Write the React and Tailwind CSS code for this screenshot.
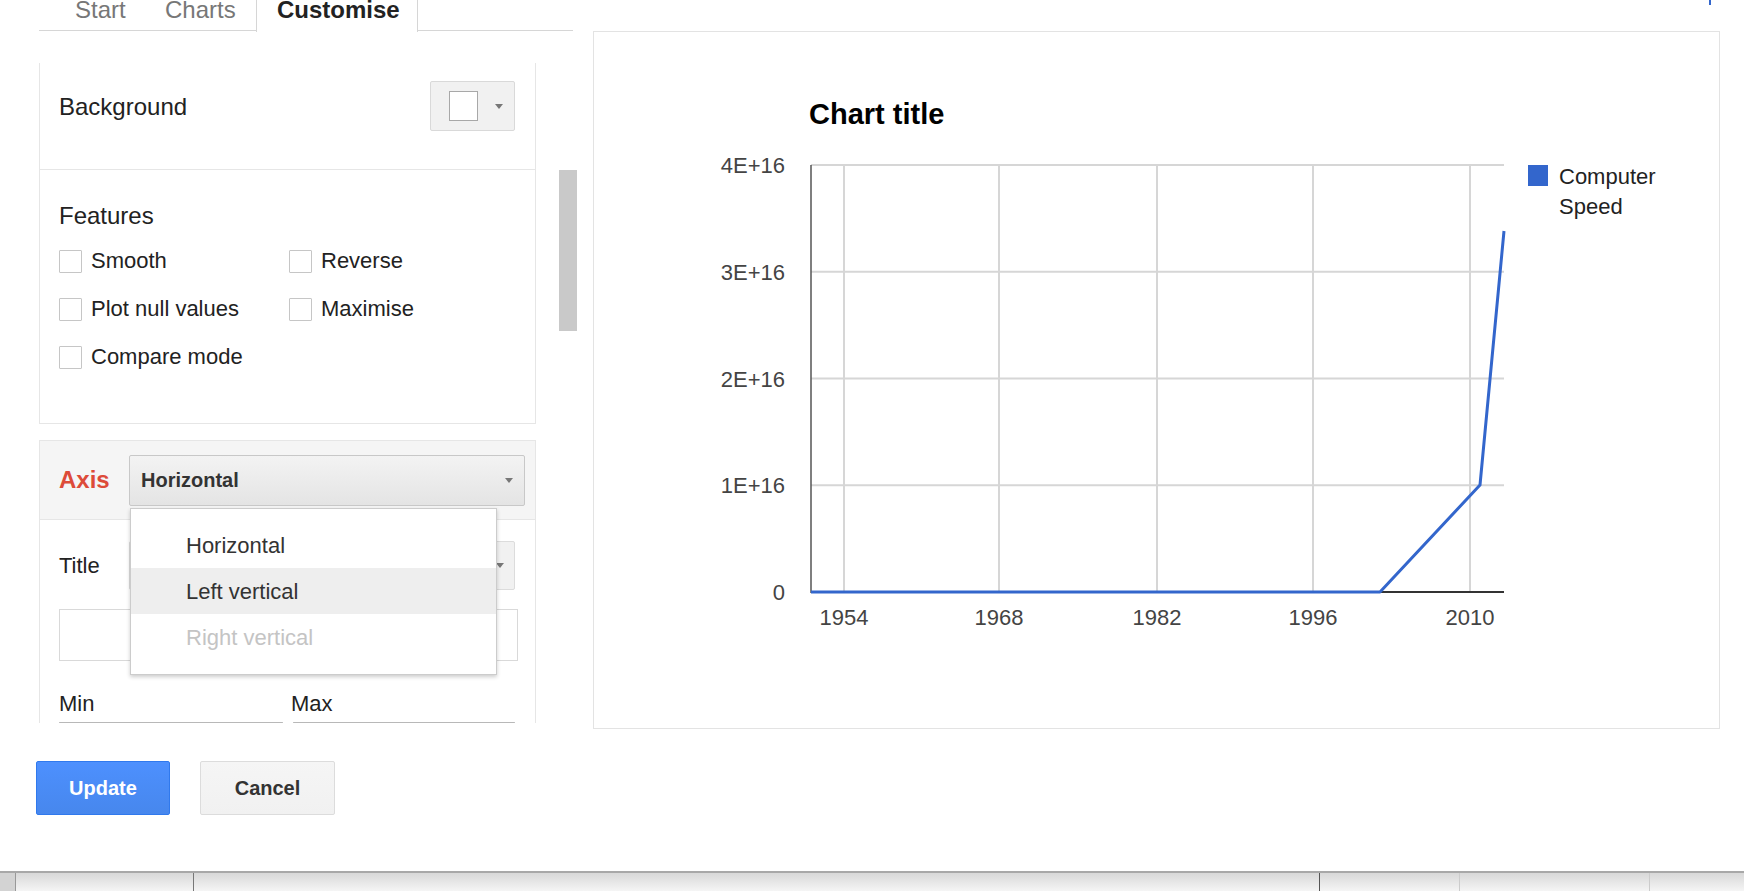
import React from 'react';

const font = "font-['Liberation_Sans',Arial,sans-serif]";

function Caret() {
  return <div className="w-0 h-0 border-l-[4px] border-r-[4px] border-t-[5px] border-l-transparent border-r-transparent border-t-[#777]" />;
}

function Checkbox({ label }) {
  return (
    <div className="flex items-center h-[48px]">
      <div className="w-[23px] h-[23px] border border-[#c6c6c6] rounded-[1px] bg-white" />
      <span className="ml-[9px] text-[22px] leading-[24px] text-[#222]">{label}</span>
    </div>
  );
}

function Chart() {
  const gridY = [165, 271.75, 378.5, 485.25, 592];
  const yLabels = ['4E+16', '3E+16', '2E+16', '1E+16', '0'];
  const gridX = [844, 999, 1157, 1313, 1470];
  const xLabels = ['1954', '1968', '1982', '1996', '2010'];
  return (
    <svg width="1125" height="696" viewBox="594 32 1125 696" className="block">
      <text x="809" y="124" fontSize="29" fontWeight="bold" fill="#000" fontFamily="Liberation Sans, Arial, sans-serif">Chart title</text>
      {gridY.map((y) => (
        <line key={y} x1="811" x2="1504" y1={y} y2={y} stroke="#d6d6d6" strokeWidth="2" />
      ))}
      {gridX.map((x) => (
        <line key={x} x1={x} x2={x} y1="165" y2="592" stroke="#d6d6d6" strokeWidth="2" />
      ))}
      <line x1="811" x2="811" y1="165" y2="593" stroke="#555" strokeWidth="1.5" />
      <line x1="811" x2="1504" y1="592" y2="592" stroke="#333" strokeWidth="2" />
      {yLabels.map((t, i) => (
        <text key={t} x="785" y={gridY[i] + 8} fontSize="22" textAnchor="end" fill="#444" fontFamily="Liberation Sans, Arial, sans-serif">{t}</text>
      ))}
      {xLabels.map((t, i) => (
        <text key={t} x={gridX[i]} y="625" fontSize="22" textAnchor="middle" fill="#444" fontFamily="Liberation Sans, Arial, sans-serif">{t}</text>
      ))}
      <polyline points="811,592 1380,592 1480,485 1504,231" fill="none" stroke="#3366cc" strokeWidth="3" strokeLinejoin="round" />
      <rect x="1528" y="165" width="20" height="21" fill="#3366cc" />
      <text x="1559" y="184" fontSize="22" fill="#222" fontFamily="Liberation Sans, Arial, sans-serif">Computer</text>
      <text x="1559" y="214" fontSize="22" fill="#222" fontFamily="Liberation Sans, Arial, sans-serif">Speed</text>
    </svg>
  );
}

export default function App() {
  return (
    <div className={`${font} relative w-[1744px] h-[891px] bg-white overflow-hidden flex flex-col`}>
      <div className="absolute left-[1709px] top-0 w-[2px] h-[5px] bg-[#3366cc]" />

      <div className="flex h-[871px] items-start">
        {/* left column */}
        <div className="w-[577px] pl-[39px] flex flex-col">
          {/* tabs */}
          <div className="flex h-[31px] w-[534px] border-b border-[#d6d6d6]">
            <div className="w-[126px] pl-[36px]">
              <span className="block -mt-[2px] text-[24px] leading-[24px] text-[#777]">Start</span>
            </div>
            <div className="w-[91px]">
              <span className="block -mt-[2px] text-[24px] leading-[24px] text-[#777]">Charts</span>
            </div>
            <div className="w-[162px] h-[32px] px-[20px] border-x border-[#d6d6d6] bg-white">
              <span className="block -mt-[2px] text-[24px] leading-[24px] font-bold text-[#222]">Customise</span>
            </div>
          </div>

          {/* scroll area */}
          <div className="mt-[32px] h-[660px] flex overflow-hidden">
            <div className="w-[497px] shrink-0 relative">
              {/* card 1 */}
              <div className="border-x border-b border-[#e6e6e6]">
                <div className="h-[107px] border-b border-[#e6e6e6] flex items-start justify-between pl-[19px] pr-[20px] pt-[18px]">
                  <span className="mt-[12px] text-[24px] leading-[28px] text-[#222]">Background</span>
                  <div className="w-[85px] h-[50px] flex items-center border border-[#d9d9d9] rounded-[2px] bg-[#f1f1f1]">
                    <div className="ml-[18px] w-[29px] h-[30px] border border-[#a8a8a8] bg-white" />
                    <div className="ml-[17px]"><Caret /></div>
                  </div>
                </div>
                <div className="h-[253px] pl-[19px] pt-[34px]">
                  <div className="text-[24px] leading-[24px] text-[#222]">Features</div>
                  <div className="mt-[9px] grid grid-cols-[230px_1fr]">
                    <Checkbox label="Smooth" />
                    <Checkbox label="Reverse" />
                    <Checkbox label="Plot null values" />
                    <Checkbox label="Maximise" />
                    <Checkbox label="Compare mode" />
                  </div>
                </div>
              </div>

              {/* axis card */}
              <div className="relative mt-[16px] border-x border-t border-[#e6e6e6] h-[300px]">
                <div className="h-[79px] bg-[#f5f5f5] border-b border-[#e6e6e6] flex items-center pl-[19px]">
                  <span className="w-[70px] text-[24px] leading-[28px] font-bold text-[#dd4b39]">Axis</span>
                  <div className="w-[396px] h-[51px] flex items-center justify-between pl-[11px] pr-[11px] border border-[#c8c8c8] rounded-[2px] bg-gradient-to-b from-[#f3f3f3] to-[#e4e4e4]">
                    <span className="text-[20px] font-bold text-[#333]">Horizontal</span>
                    <Caret />
                  </div>
                </div>
                <div className="pl-[19px]">
                  <div className="mt-[21px] flex items-center h-[49px]">
                    <span className="w-[70px] text-[22px] text-[#222]">Title</span>
                    <div className="w-[386px] h-[49px] flex items-center justify-end pr-[10px] border border-[#dcdcdc] rounded-[2px] bg-[#f1f1f1]">
                      <Caret />
                    </div>
                  </div>
                  <div className="mt-[19px] w-[459px] h-[52px] border border-[#d9d9d9] bg-white" />
                  <div className="mt-[31px] grid grid-cols-[232px_1fr] text-[22px] leading-[24px] text-[#222]">
                    <span>Min</span>
                    <span>Max</span>
                  </div>
                  <div className="mt-[6px] flex">
                    <div className="w-[224px] h-[50px] border border-[#c8c8c8] border-t-[#b8b8b8]" />
                    <div className="ml-[10px] w-[222px] h-[50px] border border-[#c8c8c8] border-t-[#b8b8b8]" />
                  </div>
                </div>

                {/* dropdown menu */}
                <div className="absolute left-[90px] top-[67px] w-[367px] h-[167px] pt-[13px] pb-[15px] bg-white border border-[#cccccc] shadow-[0_2px_4px_rgba(0,0,0,0.2)] text-[22px]">
                  <div className="h-[46px] flex items-center pl-[55px] text-[#333]">Horizontal</div>
                  <div className="h-[46px] flex items-center pl-[55px] text-[#333] bg-[#eeeeee]">Left vertical</div>
                  <div className="h-[46px] flex items-center pl-[55px] text-[#c4c4c4]">Right vertical</div>
                </div>
              </div>
            </div>
            {/* scrollbar */}
            <div className="ml-[23px] mt-[107px] w-[18px] h-[161px] bg-[#c9c9c9]" />
          </div>

          {/* buttons */}
          <div className="mt-[38px] -ml-[3px] flex">
            <button className="w-[134px] h-[54px] rounded-[2px] border border-[#3079ed] bg-gradient-to-b from-[#4d90fe] to-[#4787ed] text-white text-[20px] font-bold">Update</button>
            <button className="ml-[30px] w-[135px] h-[54px] rounded-[2px] border border-[#dcdcdc] bg-gradient-to-b from-[#f5f5f5] to-[#f1f1f1] text-[#333] text-[20px] font-bold">Cancel</button>
          </div>
        </div>

        {/* chart panel */}
        <div className="ml-[16px] mt-[31px] w-[1127px] h-[698px] border border-[#e3e3e3]">
          <Chart />
        </div>
      </div>

      {/* bottom bar */}
      <div className="h-[20px] flex border-t-2 border-[#a8a8a8] bg-gradient-to-b from-[#d8d8d8] to-[#f5f5f5]">
        <div className="w-[16px] border-r border-[#999] bg-[#d3d3d3]" />
        <div className="w-[178px] border-r border-[#777]" />
        <div className="w-[1126px] border-r border-[#555]" />
        <div className="w-[140px] border-r border-[#cccccc]" />
        <div className="w-[190px] border-r border-[#cccccc]" />
        <div className="flex-1" />
      </div>
    </div>
  );
}
